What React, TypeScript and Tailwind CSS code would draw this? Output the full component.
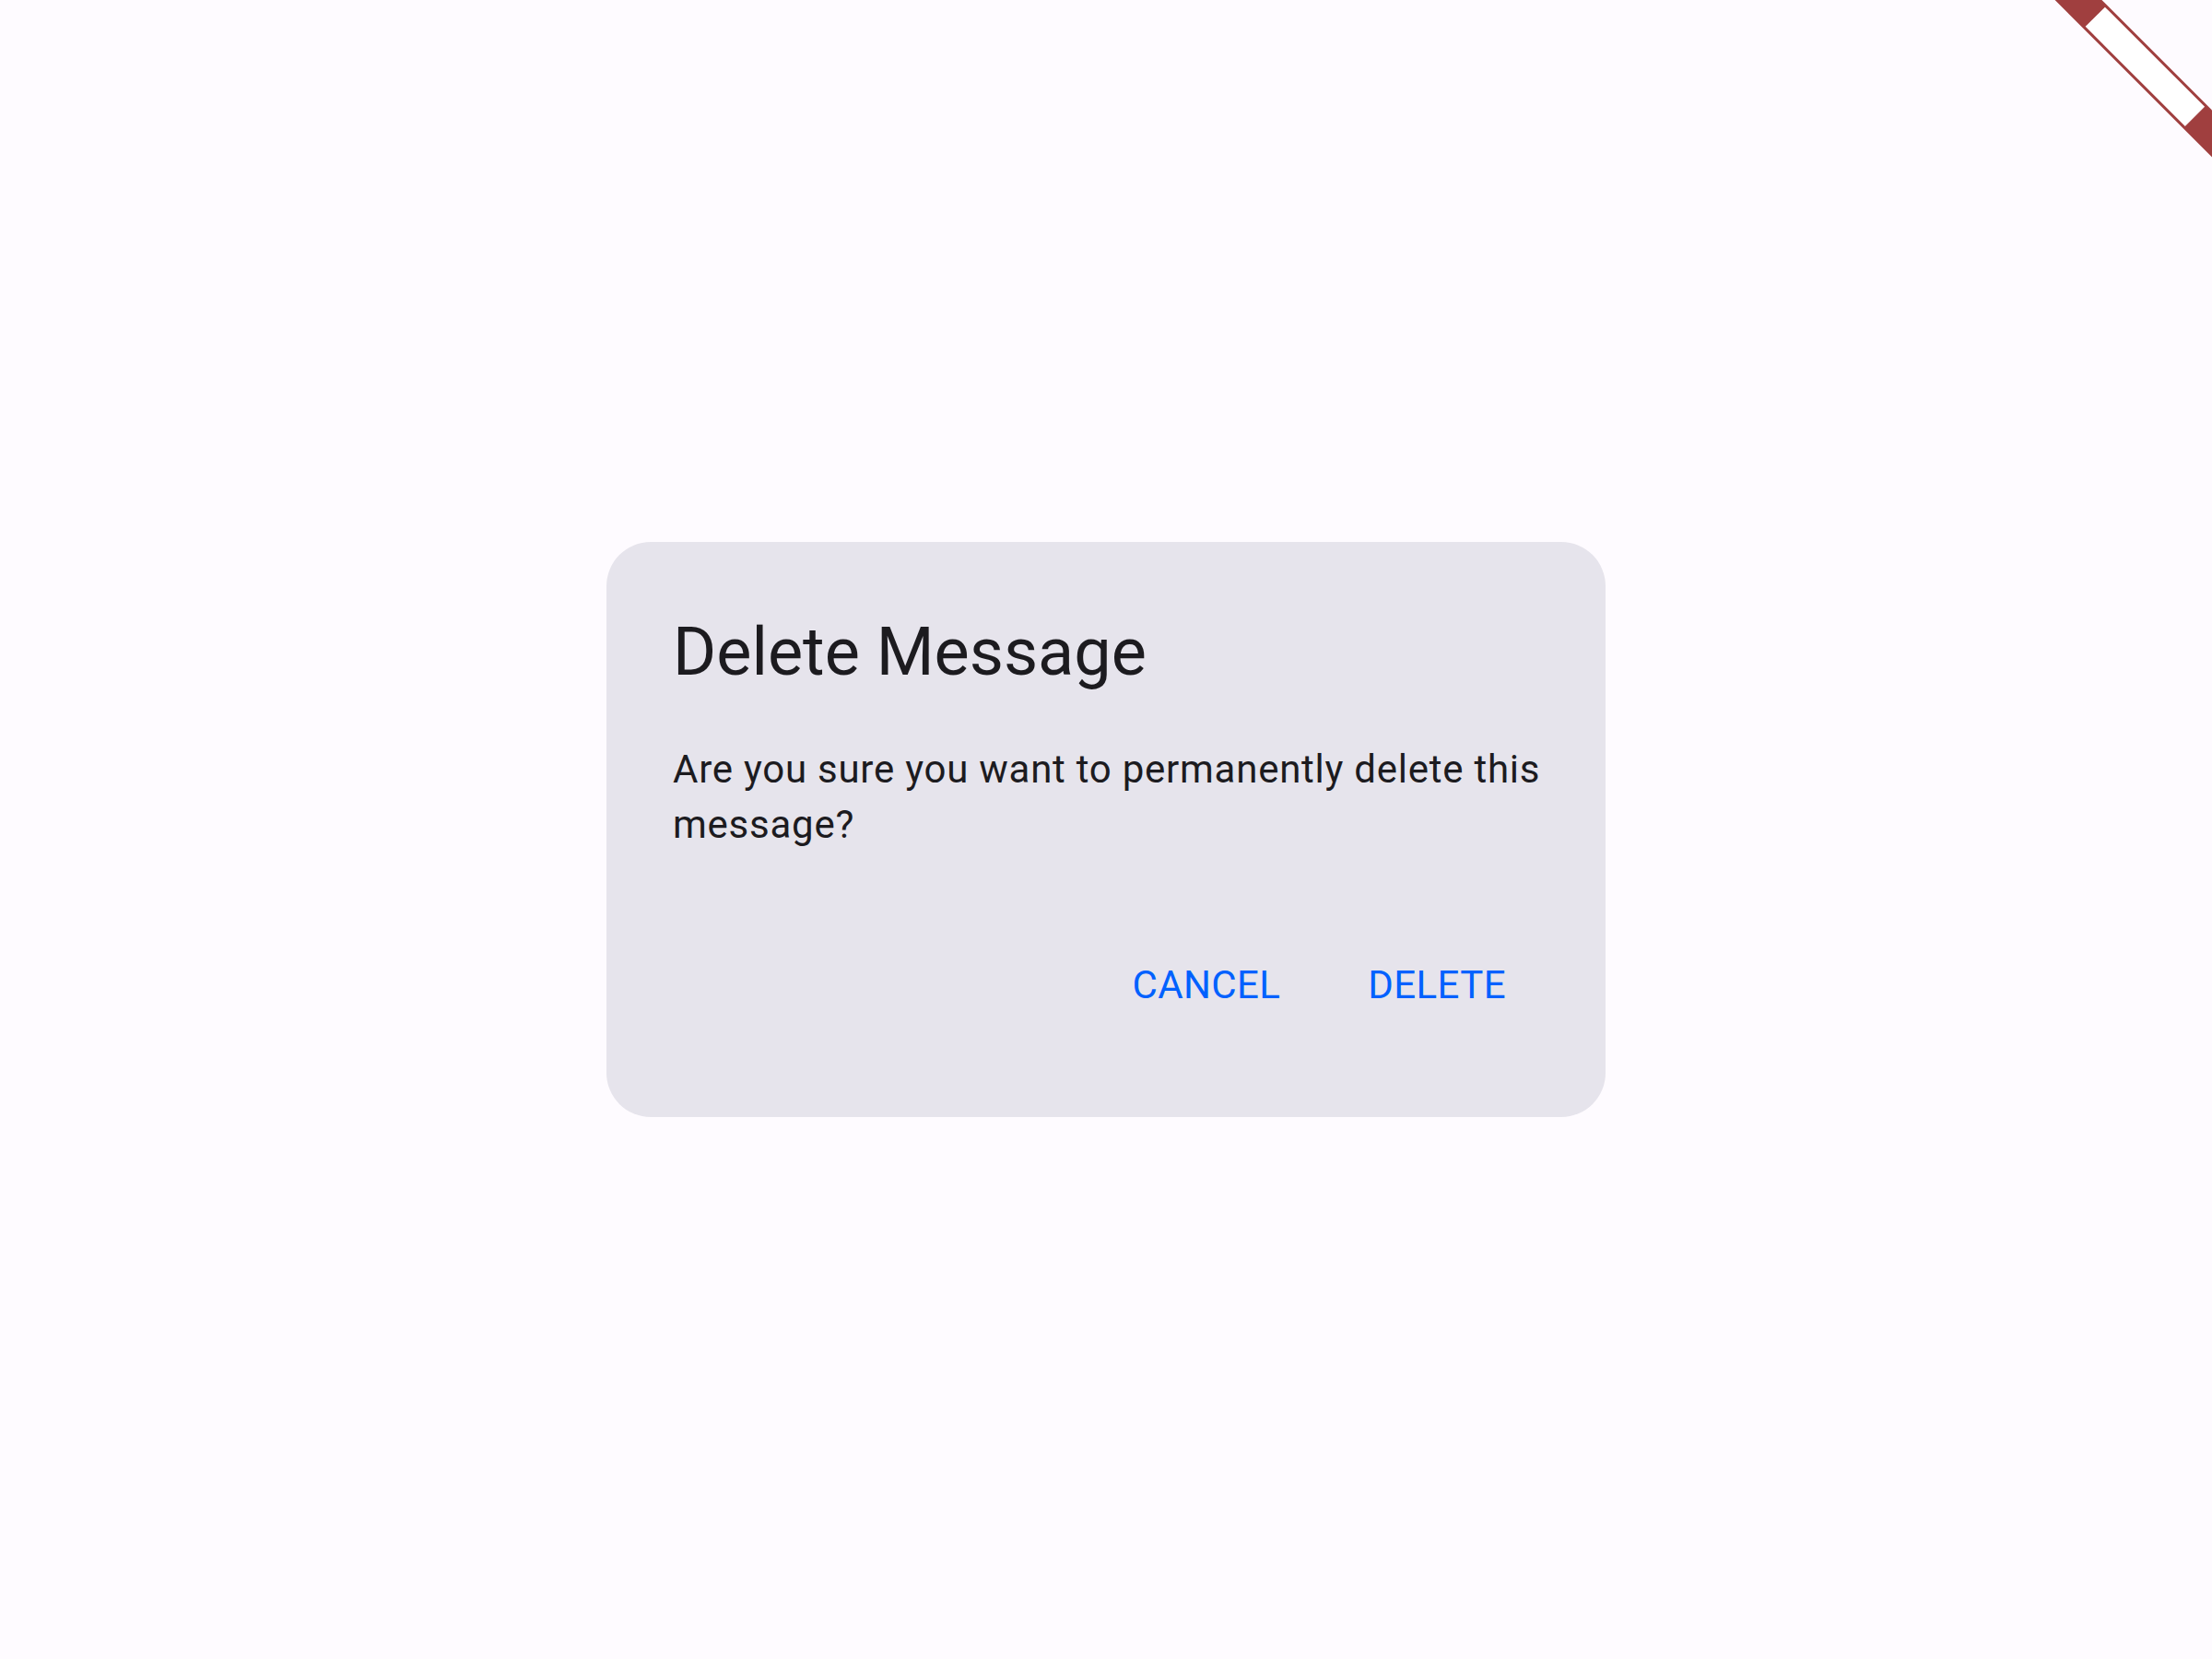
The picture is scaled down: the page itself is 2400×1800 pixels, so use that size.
import * as React from "react";

// the red ribbon in the top-right corner (debug build marker)
function DebugRibbon() {
  return (
    <div className="pointer-events-none absolute left-[2177px] top-[54px] flex h-[36px] w-[300px] rotate-45 items-center justify-center bg-[#a03f3f]">
      <div className="h-[30px] w-[153px] bg-white" aria-label="DEBUG" />
    </div>
  );
}

function DeleteDialog() {
  return (
    <div className="w-[1084px] rounded-[48px] bg-[#e6e4ec] pt-[72px] pb-[113px]">
      <h1 className="px-[72px] text-[72px] font-normal leading-[96px] text-[#1c1b1f]">
        Delete Message
      </h1>
      <p className="mt-[49px] pl-[72px] pr-[44px] text-[42px] leading-[60px] tracking-[0.75px] text-[#1c1b1f]">
        Are you sure you want to permanently delete this message?
      </p>
      <div className="mt-[114px] flex justify-end gap-[23px] pr-[72px]">
        <button className="px-[36px] text-[42px] leading-[60px] tracking-[0.4px] text-[#0061fe]">
          CANCEL
        </button>
        <button className="px-[36px] text-[42px] leading-[60px] tracking-[0.4px] text-[#0061fe]">
          DELETE
        </button>
      </div>
    </div>
  );
}

export default function App() {
  return (
    <main
      className="relative flex h-[1800px] w-[2400px] items-center justify-center overflow-hidden bg-[#fefbff]"
      style={{ fontFamily: "Roboto, 'Noto Sans', sans-serif" }}
    >
      <DeleteDialog />
      <DebugRibbon />
    </main>
  );
}
